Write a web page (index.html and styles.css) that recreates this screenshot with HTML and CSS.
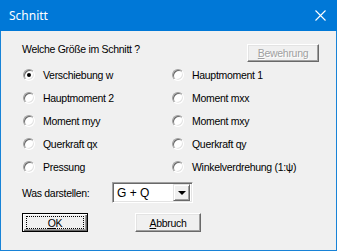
FILE: index.html
```html
<!DOCTYPE html>
<html lang="de">
<head>
    <meta charset="UTF-8">
    <title>Schnitt</title>
    <link rel="stylesheet" href="styles.css">
</head>
<body>
    <div class="dialog">
        <!-- Title bar -->
        <div class="titlebar">
            <span class="title">Schnitt</span>
            <svg class="close" width="11" height="11" viewBox="0 0 11 11">
                <path d="M0.5 0.5 L10.5 10.5 M10.5 0.5 L0.5 10.5" stroke="#fff" stroke-width="1.1" fill="none"/>
            </svg>
        </div>

        <div class="content">
            <div class="header">
                <span class="question">Welche Größe im Schnitt ?</span>
                <div class="btn disabled"><span><u>B</u>ewehrung</span></div>
            </div>

            <!-- Radio options -->
            <div class="options">
                <div class="option"><span class="radio checked"></span>Verschiebung w</div>
                <div class="option"><span class="radio"></span>Hauptmoment 1</div>
                <div class="option"><span class="radio"></span>Hauptmoment 2</div>
                <div class="option"><span class="radio"></span>Moment mxx</div>
                <div class="option"><span class="radio"></span>Moment myy</div>
                <div class="option"><span class="radio"></span>Moment mxy</div>
                <div class="option"><span class="radio"></span>Querkraft qx</div>
                <div class="option"><span class="radio"></span>Querkraft qy</div>
                <div class="option"><span class="radio"></span>Pressung</div>
                <div class="option"><span class="radio"></span>Winkelverdrehung (1:ψ)</div>
            </div>

            <div class="show-row">
                <span>Was darstellen:</span>
                <div class="combo">
                    <span class="combo-value">G + Q</span>
                    <div class="combo-btn"><span class="arrow"></span></div>
                </div>
            </div>

            <div class="buttons">
                <div class="btn default"><span class="focus"><u>O</u>K</span></div>
                <div class="btn"><span><u>A</u>bbruch</span></div>
            </div>
        </div>
    </div>
</body>
</html>
```

FILE: styles.css
```css
body {
    margin: 0;
    background: #f0f0f0;
}
.dialog {
    width: 337px;
    height: 251px;
    box-sizing: border-box;
    border: 1px solid #1883d7;
    border-top: none;
    background: #f0f0f0;
    font-family: "Liberation Sans", Arial, sans-serif;
    font-size: 10.5px;
    letter-spacing: -0.3px;
    color: #000;
}
.titlebar {
    height: 31px;
    margin: 0 -1px;
    background: #0078d7;
    display: flex;
    align-items: center;
    justify-content: space-between;
    padding: 0 11px 0 9px;
    letter-spacing: 0;
}
.title {
    font-family: "Noto Sans", sans-serif;
    font-size: 12px;
    color: #fff;
    margin-top: -1px;
}
.close {
    display: block;
    margin-top: -1px;
}
.content {
    padding: 13px 17px 0 21px;
}
.header {
    display: flex;
    justify-content: space-between;
    align-items: flex-start;
    height: 18px;
}
.question {
    line-height: 13px;
    margin-top: -1px;
}
.btn {
    box-sizing: border-box;
    height: 19px;
    display: flex;
    align-items: center;
    justify-content: center;
    background: #f0f0f0;
    border: 1px solid;
    border-color: #fff #696969 #696969 #fff;
    box-shadow: inset -1px -1px 0 #a0a0a0, inset 1px 1px 0 #e3e3e3;
    width: 66px;
}
.btn.disabled {
    width: 72px;
    height: 18px;
    color: #a0a0a0;
    text-shadow: 1px 1px 0 #fff;
}
.btn.default {
    border: 1px solid #000;
    box-shadow: inset 1px 1px 0 #fff, inset -1px -1px 0 #696969, inset -2px -2px 0 #a0a0a0;
}
.focus {
    display: flex;
    align-items: center;
    justify-content: center;
    width: 56px;
    height: 11px;
    outline: 1px dotted #000;
}
.options {
    display: grid;
    grid-template-columns: 149px 1fr;
    grid-auto-rows: 23px;
    margin-top: 1px;
}
.option {
    display: flex;
    align-items: center;
    padding-left: 1px;
}
.radio {
    position: relative;
    box-sizing: border-box;
    width: 12px;
    height: 12px;
    border-radius: 50%;
    border: 1px solid;
    border-color: #a0a0a0 #fff #fff #a0a0a0;
    background: #fff;
    box-shadow: inset 1px 1px 0 #696969, inset -1px -1px 0 #e3e3e3;
    margin-right: 8px;
}
.radio.checked::after {
    content: "";
    position: absolute;
    left: 3px;
    top: 3px;
    width: 4px;
    height: 4px;
    border-radius: 50%;
    background: #000;
}
.show-row {
    display: flex;
    align-items: center;
    margin-top: 4px;
    height: 21px;
}
.show-row > span {
    width: 90px;
}
.combo {
    box-sizing: border-box;
    width: 81px;
    height: 21px;
    display: flex;
    align-items: center;
    justify-content: space-between;
    background: #fff;
    border: 1px solid;
    border-color: #a0a0a0 #fff #fff #a0a0a0;
    box-shadow: inset 1px 1px 0 #696969, inset -1px -1px 0 #e3e3e3;
    padding: 2px 2px 2px 4px;
}
.combo-value {
    font-size: 12px;
    letter-spacing: 0;
}
.combo-btn {
    box-sizing: border-box;
    width: 17px;
    height: 17px;
    background: #f0f0f0;
    border: 1px solid;
    border-color: #e3e3e3 #696969 #696969 #e3e3e3;
    box-shadow: inset 1px 1px 0 #fff, inset -1px -1px 0 #a0a0a0;
    display: flex;
    align-items: center;
    justify-content: center;
}
.arrow {
    width: 0;
    height: 0;
    border-left: 4px solid transparent;
    border-right: 4px solid transparent;
    border-top: 4px solid #000;
    margin-left: 1px;
}
.buttons {
    display: flex;
    gap: 47px;
    margin-top: 10px;
}
```
